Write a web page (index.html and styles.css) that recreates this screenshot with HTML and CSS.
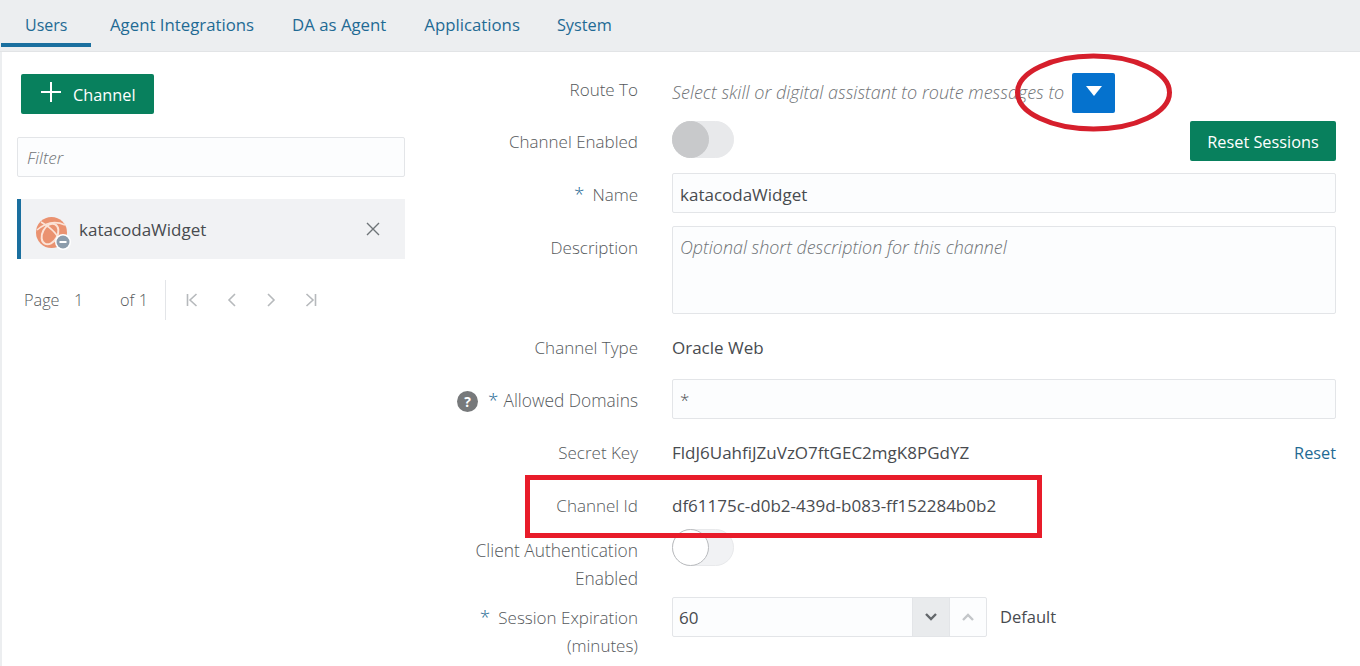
FILE: index.html
```html
<!DOCTYPE html>
<html lang="en">
<head>
    <meta charset="UTF-8">
    <title>Channels</title>
    <link rel="stylesheet" href="styles.css">
</head>
<body>
    <nav class="tabs">
        <a class="tab tab-active">Users</a>
        <a class="tab">Agent Integrations</a>
        <a class="tab">DA as Agent</a>
        <a class="tab">Applications</a>
        <a class="tab">System</a>
    </nav>
    <main class="panel">
        <section class="side">
            <button class="btn btn-add"><span class="plus"></span>Channel</button>
            <div class="field filter placeholder">Filter</div>
            <div class="item">
                <svg class="item-icon" width="35" height="34" viewBox="0 0 35 34">
                    <circle cx="15.5" cy="15.5" r="15.5" fill="#ea9270"/>
                    <ellipse cx="14" cy="17" rx="7.5" ry="11" transform="rotate(28 14 17)" fill="none" stroke="#fbe3d7" stroke-width="2"/>
                    <path d="M5 5C12 9 23 16 25 28M1 13C8 7 18 3 29 8" fill="none" stroke="#fbe3d7" stroke-width="1.6"/>
                    <circle cx="27" cy="25" r="8" fill="#fff"/>
                    <circle cx="27" cy="25" r="6.5" fill="#8c9cab"/>
                    <rect x="23.5" y="24" width="7" height="2" fill="#fff"/>
                </svg>
                <span class="item-name">katacodaWidget</span>
                <svg class="item-close" width="14" height="14" viewBox="0 0 14 14">
                    <path d="M1 1L13 13M13 1L1 13" stroke="#6f7478" stroke-width="1.4"/>
                </svg>
            </div>
            <div class="pager">
                <span class="pager-page">Page</span>
                <span class="pager-num">1</span>
                <span class="pager-of">of 1</span>
                <div class="pager-icons">
                    <svg width="12" height="14" viewBox="0 0 12 14"><path d="M1.5 1V13M10.5 1L4 7L10.5 13" class="pager-stroke"/></svg>
                    <svg width="10" height="14" viewBox="0 0 10 14"><path d="M8 1L2 7L8 13" class="pager-stroke"/></svg>
                    <svg width="10" height="14" viewBox="0 0 10 14"><path d="M2 1L8 7L2 13" class="pager-stroke"/></svg>
                    <svg width="12" height="14" viewBox="0 0 12 14"><path d="M10.5 1V13M1.5 1L8 7L1.5 13" class="pager-stroke"/></svg>
                </div>
            </div>
        </section>

        <form class="form">
            <div class="row row-route">
                <label class="label">Route To</label>
                <div class="control route">
                    <span class="placeholder route-text">Select skill or digital assistant to route messages to</span>
                    <button type="button" class="route-btn"><span class="caret"></span></button>
                </div>
            </div>
            <div class="row row-enabled">
                <label class="label">Channel Enabled</label>
                <div class="control spread">
                    <span class="switch switch-grey"><span class="knob"></span></span>
                    <button type="button" class="btn btn-reset">Reset Sessions</button>
                </div>
            </div>
            <div class="row">
                <label class="label label-low"><span class="req">*</span>Name</label>
                <div class="control"><div class="field field-value">katacodaWidget</div></div>
            </div>
            <div class="row row-desc">
                <label class="label label-low">Description</label>
                <div class="control"><div class="field area placeholder">Optional short description for this channel</div></div>
            </div>
            <div class="row row-type">
                <label class="label">Channel Type</label>
                <div class="control">Oracle Web</div>
            </div>
            <div class="row row-domains">
                <label class="label label-domains"><span class="help">?</span><span class="req">*</span>Allowed Domains</label>
                <div class="control"><div class="field field-light">*</div></div>
            </div>
            <div class="row">
                <label class="label">Secret Key</label>
                <div class="control spread">
                    <span>FldJ6UahfiJZuVzO7ftGEC2mgK8PGdYZ</span>
                    <a class="link">Reset</a>
                </div>
            </div>
            <div class="row row-id">
                <label class="label">Channel Id</label>
                <div class="control">df61175c-d0b2-439d-b083-ff152284b0b2</div>
            </div>
            <div class="row row-client">
                <label class="label label-two label-wide">Client Authentication Enabled</label>
                <div class="control control-top"><span class="switch"><span class="knob"></span></span></div>
            </div>
            <div class="row row-session">
                <label class="label label-two">
                    <span class="req">*</span>Session Expiration (minutes)
                </label>
                <div class="control control-top">
                    <div class="spin">
                        <span class="spin-value">60</span>
                        <span class="spin-btn spin-down">
                            <svg width="14" height="10" viewBox="0 0 14 10"><path d="M2 2L7 7L12 2" fill="none" stroke="#63676b" stroke-width="2.4"/></svg>
                        </span>
                        <span class="spin-btn">
                            <svg width="14" height="10" viewBox="0 0 14 10"><path d="M2 8L7 3L12 8" fill="none" stroke="#c3c6c9" stroke-width="2.4"/></svg>
                        </span>
                    </div>
                    <span class="spin-note">Default</span>
                </div>
            </div>
        </form>
    </main>

    <!-- annotations drawn over the screenshot -->
    <svg class="mark-ellipse" width="164" height="84" viewBox="0 0 164 84">
        <ellipse cx="81.5" cy="41.5" rx="76" ry="36.5" fill="none" stroke="#d61f2c" stroke-width="5"/>
    </svg>
    <div class="mark-box"></div>
</body>
</html>
```

FILE: styles.css
```css
html { box-sizing: border-box; }
*, *:before, *:after { box-sizing: inherit; }
body {
    position: relative;
    margin: 0;
    height: 666px;
    overflow: hidden;
    background: #eceef0;
    font-family: "Open Sans", sans-serif;
    font-size: 17px;
    color: #484b4f;
}

/* tabs */
.tabs {
    display: flex;
    height: 52px;
    padding-left: 1px;
    border-bottom: 1px solid #e2e4e6;
    font-size: 16.8px;
}
.tab {
    height: 47px;
    line-height: 50px;
    padding: 0 19px;
    color: #1f6a94;
}
.tab:last-child { font-size: 16.3px; margin-left: -1px; }
.tab-active {
    width: 90px;
    padding: 0 0 0 24px;
    border-bottom: 4px solid #1a6f9f;
    font-size: 16px;
}

.panel {
    display: flex;
    height: 614px;
    margin-left: 2px;
    background: #fff;
}

/* left column */
.side {
    width: 436px;
    flex: none;
    padding: 22px 0 0 15px;
}
.btn {
    height: 40px;
    border: none;
    border-radius: 2px;
    background: #08805d;
    color: #fff;
    font: inherit;
    font-size: 16.3px;
}
.btn-add {
    display: flex;
    align-items: center;
    width: 133px;
    margin-left: 4px;
    padding: 2px 0 0 20px;
}
.plus {
    width: 20px;
    height: 20px;
    margin: -6px 12px 0 0;
    background:
        linear-gradient(#fff, #fff) center / 100% 2px no-repeat,
        linear-gradient(#fff, #fff) center / 2px 100% no-repeat;
}
.field {
    height: 40px;
    padding: 0 7px;
    line-height: 40px;
    background: #fcfdfe;
    border: 1px solid #e3e5e8;
    border-radius: 2px;
}
.field-value { line-height: 41px; }
.field-light { font-weight: 300; }
.placeholder {
    font-style: italic;
    font-size: 17.9px;
    font-weight: 300;
    color: #6f7376;
}
.filter {
    width: 388px;
    margin-top: 23px;
    padding-left: 9px;
    font-size: 17px;
}
.item {
    display: flex;
    align-items: center;
    width: 388px;
    height: 60px;
    margin-top: 22px;
    padding: 0 25px 0 15px;
    background: #f1f2f4;
    border-left: 4px solid #1a6f9f;
}
.item-icon { flex: none; margin-top: 10px; }
.item-name { flex: 1; margin-left: 8px; }
.pager {
    display: flex;
    align-items: center;
    height: 40px;
    margin-top: 21px;
    padding-left: 7px;
    font-size: 16.3px;
    font-weight: 300;
    color: #55595c;
}
.pager-page { width: 50px; }
.pager-num { width: 46px; }
.pager-of {
    width: 46px;
    height: 40px;
    line-height: 40px;
    border-right: 1px solid #e3e5e8;
}
.pager-icons {
    display: flex;
    align-items: center;
    gap: 29px;
    margin-left: 20px;
}
.pager-stroke {
    fill: none;
    stroke: #b6b9bc;
    stroke-width: 1.6;
}

/* form */
.form {
    flex: 1;
    padding: 18px 24px 0 0;
}
.row {
    display: flex;
    align-items: flex-start;
    min-height: 40px;
    margin-bottom: 13px;
}
.label {
    flex: none;
    width: 200px;
    margin-right: 34px;
    line-height: 40px;
    text-align: right;
    font-weight: 300;
    color: #55595c;
}
.label-low { height: 40px; padding-top: 2px; }
.label-domains { height: 40px; padding-top: 1px; font-size: 17.35px; }
.label-domains .req { margin-right: 5px; }
.label-wide { font-size: 17.35px; }
.req {
    margin-right: 8px;
    color: #1f6a94;
    font-size: 19px;
    line-height: 0;
}
.help {
    display: inline-block;
    width: 21px;
    height: 21px;
    margin-right: 10px;
    border-radius: 50%;
    background: #77797b;
    color: #fff;
    font-size: 14px;
    font-weight: 700;
    line-height: 21px;
    text-align: center;
}
.control {
    flex: 1;
    min-width: 0;
    display: block;
    line-height: 40px;
}
.control-top { display: flex; align-items: flex-start; }
.spread {
    display: flex;
    align-items: flex-start;
    justify-content: space-between;
}
.route {
    display: flex;
    align-items: flex-start;
    height: 40px;
}
.route-text {
    width: 400px;
    font-size: 18px;
    padding-top: 2px;
}
.route-btn {
    flex: none;
    width: 43px;
    height: 40px;
    margin-top: 3px;
    padding: 0;
    border: none;
    border-radius: 2px;
    background: #0572ce;
}
.caret {
    display: block;
    width: 0;
    height: 0;
    margin: -4px auto 0;
    border-left: 8px solid transparent;
    border-right: 8px solid transparent;
    border-top: 10px solid #fff;
}
.switch {
    display: block;
    width: 62px;
    height: 37px;
    border-radius: 19px;
    background: #f1f2f4;
    border: 1px solid #e8e9eb;
}
.switch-grey { margin-top: -1px; background: #e8e9eb; }
.knob {
    display: block;
    width: 37px;
    height: 37px;
    margin: -1px 0 0 -1px;
    border-radius: 50%;
    background: #fff;
    border: 1px solid #b9bbbe;
}
.switch-grey .knob {
    background: #c8c9cb;
    border-color: #c8c9cb;
}
.btn-reset {
    width: 146px;
    margin-top: -1px;
    padding: 2px 0 0;
    line-height: 38px;
}
.area { height: 88px; }
.row-route { margin-bottom: 12px; }
.row-enabled { margin-bottom: 11px; }
.row-desc { margin-bottom: 14px; }
.row-type { margin-bottom: 11px; }
.row-domains { margin-bottom: 14px; }
.link { color: #1f6a94; font-size: 16.3px; }
.row-id { margin-bottom: 10px; }
.label-two { line-height: 28px; }
.row-client { height: 56px; margin-bottom: 5px; }
.row-client .switch { margin-top: -7px; }
.row-session .label-two { padding-top: 7px; }
.row-session { margin-bottom: 0; }
.spin {
    display: flex;
    width: 315px;
    height: 40px;
    background: #fcfdfe;
    border: 1px solid #e3e5e8;
    border-radius: 2px;
}
.spin-value { flex: 1; padding-left: 6px; }
.spin-btn {
    display: flex;
    align-items: center;
    justify-content: center;
    width: 37px;
    border-left: 1px solid #e3e5e8;
}
.spin-down { background: #e9ebed; }
.spin-note { margin-left: 13px; font-size: 16.5px; }

/* annotations */
.mark-ellipse {
    position: absolute;
    left: 1012px;
    top: 51px;
}
.mark-box {
    position: absolute;
    left: 525px;
    top: 475px;
    width: 517px;
    height: 63px;
    border: 5px solid #e81c2a;
}
```
